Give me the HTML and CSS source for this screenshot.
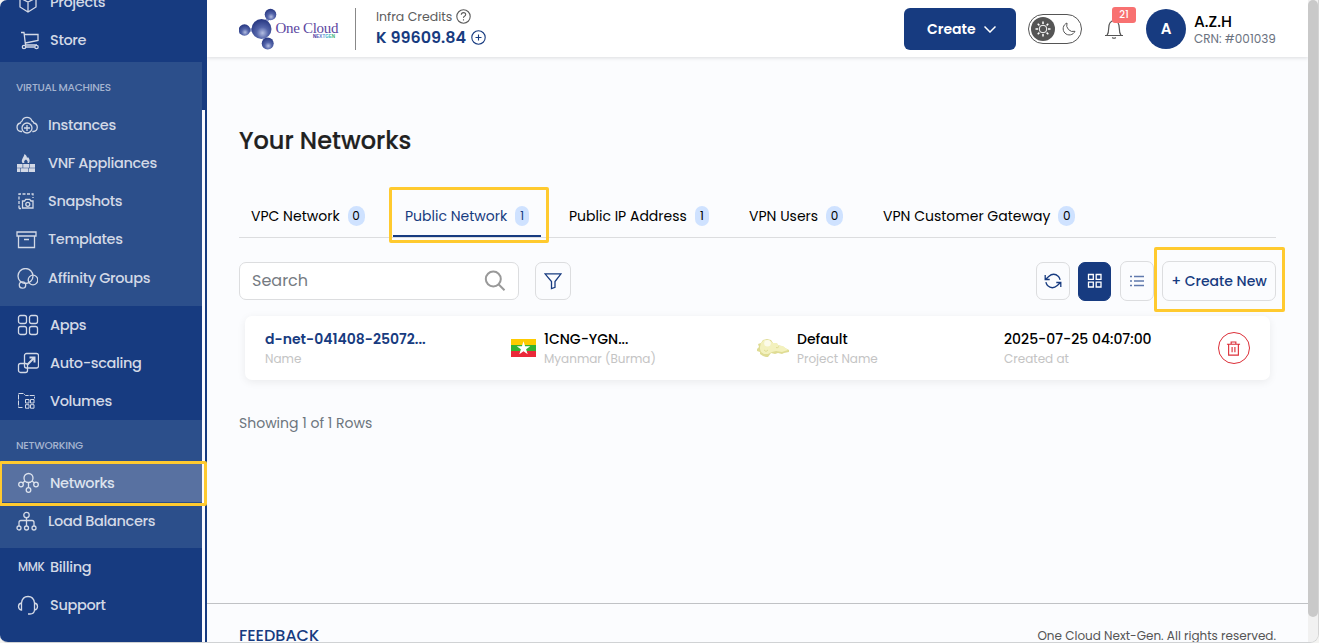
FILE: index.html
```html
<!DOCTYPE html>
<html lang="en">
<head>
<meta charset="utf-8">
<title>One Cloud - Your Networks</title>
<link rel="stylesheet" href="styles.css">
</head>
<body>
<div class="window">
  <aside class="sidebar">
    <nav class="menu">
      <div class="group group-top">
        <a class="item inset"><svg class="ico" viewBox="0 0 22 22"><path d="M11 2l8 4v9l-8 5-8-5V6zM3 6l8 4 8-4M11 10v10"/></svg><span>Projects</span></a>
        <a class="item inset"><svg class="ico" viewBox="0 0 22 22"><path d="M4 2.500h3l1.500 12.500H20M7.500 4.500H21v6L8.500 13"/><circle cx="7" cy="17" r="1.700"/><circle cx="19.500" cy="17" r="1.700"/><path d="M8.700 17h9"/></svg><span>Store</span></a>
      </div>
      <div class="group light group-vm">
        <h3 class="heading">VIRTUAL MACHINES</h3>
        <a class="item"><svg class="ico" viewBox="0 0 22 22"><path d="M6 17.500H5a4.300 4.300 0 0 1-.5-8.500 2.500 2.500 0 0 1 1.500-2 5.300 5.300 0 0 1 10 0 2.500 2.500 0 0 1 1.800 2 4.300 4.300 0 0 1-.5 8.500h-1"/><circle cx="11" cy="14" r="5"/><path d="M11 11v6M8 14h6"/></svg><span>Instances</span></a>
        <a class="item"><svg class="ico" viewBox="0 0 22 22"><g class="solid"><path d="M1 12h5.600v3.700H1zM7.200 12h6v3.700h-6zM13.800 12H19v3.700h-5.200zM1 16.300h3v3.700H1zM4.600 16.300h7.600v3.700H4.600zM12.800 16.300H19v3.700h-6.200z"/><path d="M6.500 11C4.500 8 7.500 6 8.500 2c2 1.300 2.500 3 2.500 4l1-1c2 2.500 2 4 1 6h-1.500c.8-1.500-.5-2.500-1.500-3.500-1.500 1-2.500 2-1.500 3.500z"/></g></svg><span>VNF Appliances</span></a>
        <a class="item"><svg class="ico" viewBox="0 0 22 22"><path stroke-dasharray="3 1.500" d="M3 18.500V4h14v4M3 18.500h2"/><path d="M6.500 11h2l1.200-1.700h4L15 11h2v7H6.500z"/><circle cx="11.800" cy="14.300" r="2"/></svg><span>Snapshots</span></a>
        <a class="item"><svg class="ico" viewBox="0 0 22 22"><path d="M1 3h19v4H1zM2.500 7v11.500h16V7M8 10.500h5"/></svg><span>Templates</span></a>
        <a class="item low"><svg class="ico" viewBox="0 0 22 22"><circle cx="9.500" cy="8" r="7.500"/><circle cx="17" cy="12" r="4.800"/><circle cx="6.500" cy="17" r="3.200"/></svg><span>Affinity Groups</span></a>
      </div>
      <div class="group group-mid">
        <a class="item inset"><svg class="ico" viewBox="0 0 22 22"><rect x="1.500" y="1.500" width="8" height="8" rx="2"/><rect x="12.500" y="1.500" width="8" height="8" rx="2"/><rect x="1.500" y="12.500" width="8" height="8" rx="2"/><rect x="12.500" y="12.500" width="8" height="8" rx="2"/></svg><span>Apps</span></a>
        <a class="item inset"><svg class="ico" viewBox="0 0 22 22"><rect x="7.500" y="1.500" width="14" height="14.500" rx="2"/><rect x="1.500" y="11.500" width="9" height="9" rx="2"/><path stroke-width="2" d="M10.500 12.500l6.500-6.500M12.500 5.500h5v5"/></svg><span>Auto-scaling</span></a>
        <a class="item inset"><svg class="ico thin" viewBox="0 0 22 22"><path stroke-dasharray="5 1" d="M5.500 17.500H1.500V3.500h5l2 2h9V8.500"/><path d="M8.500 9.500h3.500v3.500H8.500zM13.500 9.500H17v3.500h-3.500zM8.500 14.700h3.500v3.500H8.500zM13.500 14.700H17v3.500h-3.500z"/></svg><span>Volumes</span></a>
      </div>
      <div class="group light group-net">
        <h3 class="heading">NETWORKING</h3>
        <a class="item inset active"><svg class="ico" viewBox="0 0 22 22"><circle cx="11.500" cy="6" r="4.500"/><circle cx="4" cy="12.500" r="2.300"/><circle cx="19" cy="12.500" r="2.300"/><circle cx="11.500" cy="18" r="2.300"/><path d="M8 9l-2.500 2M15 9l2.500 2M11.500 10.500v5"/></svg><span>Networks</span></a>
        <a class="item"><svg class="ico" viewBox="0 0 22 22"><circle cx="10.500" cy="5" r="2.700"/><circle cx="3" cy="18" r="2"/><circle cx="10.500" cy="18" r="2"/><circle cx="18" cy="18" r="2"/><path d="M10.500 7.700V16M3 16v-3.500q0-2 2-2h11q2 0 2 2V16"/></svg><span>Load Balancers</span></a>
      </div>
      <div class="group group-end">
        <a class="item inset"><span class="mmk">MMK</span><span>Billing</span></a>
        <a class="item inset"><svg class="ico" viewBox="0 0 22 22"><path d="M4.500 9C5 5 7.500 2.500 11 2.500S17 5 17.500 9M4.500 9v7q-3-.5-3-3.500t3-3.500M17.500 9v7q3-.5 3-3.500t-3-3.500M17.500 16q-.3 4-4.500 4h-2"/></svg><span>Support</span></a>
      </div>
    </nav>
    <div class="rail"><div class="rail-thumb"></div></div>
    <div class="mark mark-side"></div>
  </aside>

  <div class="page">
    <header class="topbar">
      <svg class="logo" viewBox="0 0 104 44">
        <defs>
          <radialGradient id="ball" cx=".55" cy=".7" r=".65"><stop offset="0" stop-color="#b4bee2"/><stop offset=".45" stop-color="#5465aa"/><stop offset="1" stop-color="#2a3a84"/></radialGradient>
          <linearGradient id="tag"><stop offset="0" stop-color="#35208f"/><stop offset=".4" stop-color="#5a7fd0"/><stop offset=".7" stop-color="#35b6c8"/><stop offset="1" stop-color="#35a84a"/></linearGradient>
        </defs>
        <path d="M7 23h14M23 22l8-14M22 23l7 14" stroke="#8f9bcb" stroke-width="3.500"/>
        <circle cx="5.500" cy="23" r="5.800" fill="url(#ball)"/><circle cx="31.500" cy="7.500" r="5.800" fill="url(#ball)"/><circle cx="28.700" cy="36.500" r="6" fill="url(#ball)"/><circle cx="22.500" cy="22" r="10" fill="url(#ball)"/>
        <text x="36.500" y="25.500" textLength="63" class="logo-name">One Cloud</text>
        <text x="74" y="31" textLength="22" class="logo-tag" fill="url(#tag)">NEXTGEN</text>
      </svg>
      <div class="credits">
        <div class="credits-label"><span>Infra Credits</span><svg class="i15" viewBox="0 0 15 15"><circle cx="7.500" cy="7.500" r="6.700"/><path d="M5.300 5.800q0-2.200 2.200-2.200t2.200 2q0 1-1.200 1.700t-1 1.500M7.500 10.200v1.200"/></svg></div>
        <div class="credits-value"><span>K 99609.84</span><svg class="i15" viewBox="0 0 15 15"><circle cx="7.500" cy="7.500" r="6.700"/><path d="M7.500 4.500v6M4.500 7.500h6"/></svg></div>
      </div>
      <button class="create"><span>Create</span><svg viewBox="0 0 12 8"><path d="M.5 1.500L6 7l5.500-5.500"/></svg></button>
      <div class="theme">
        <span class="sun"><svg viewBox="0 0 24 24"><circle cx="12" cy="12" r="3.800"/><path stroke-width="1.500" d="M12 4.500V7M12 17v2.500M4.500 12H7M17 12h2.500M6.700 6.700l1.700 1.700M15.600 15.600l1.700 1.700M6.700 17.300l1.700-1.700M15.600 8.400l1.700-1.700"/></svg></span>
        <svg class="moon" viewBox="0 0 14 14"><path d="M5 1a6.200 6.200 0 1 0 8 8.300A6.500 6.500 0 0 1 5 1z"/></svg>
      </div>
      <div class="bell"><svg viewBox="0 0 20 22"><path d="M1 17.500h18M3 17.300c1.500-2 1.700-4 1.700-7C4.700 6 6 3 10 2.500c4 .5 5.300 3.500 5.300 7.800 0 3 .2 5 1.700 7M10 2.500V1M8.200 19.500q1.800 1.500 3.600 0"/></svg><span class="count">21</span></div>
      <div class="avatar">A</div>
      <div class="who"><b>A.Z.H</b><span>CRN: #001039</span></div>
    </header>

    <main class="content">
      <h1>Your Networks</h1>
      <div class="tabs">
        <a class="tab t1"><span>VPC Network</span><i>0</i></a>
        <a class="tab t2 on"><span>Public Network</span><i class="one">1</i></a>
        <a class="tab t3"><span>Public IP Address</span><i class="one">1</i></a>
        <a class="tab t4"><span>VPN Users</span><i>0</i></a>
        <a class="tab t5"><span>VPN Customer Gateway</span><i>0</i></a>
        <div class="mark mark-tab"></div>
      </div>
      <div class="tools">
        <div class="search"><span>Search</span><svg viewBox="0 0 22 22"><circle cx="9.300" cy="9" r="7.500"/><path d="M14.500 14.200l6 6"/></svg></div>
        <div class="btn filter"><svg viewBox="0 0 18 18"><path d="M1 1.800h16L11 9.500v5.800L7.500 16.500v-7z"/></svg></div>
        <div class="btn refresh"><svg viewBox="0 0 18 18"><path d="M1.200 3v4.500h4.500M16.800 15v-4.500h-4.500M1.700 7.200l3-2.700q5-4.500 9.800 0 1.200 1.400 1.600 3.300M16.300 10.800l-3 2.700q-5 4.500-9.800 0-1.200-1.400-1.600-3.300"/></svg></div>
        <div class="btn grid"><svg viewBox="0 0 16 16"><path d="M1.500 1.500h4.800v4.800H1.500zM9.200 1.500H14v4.800H9.200zM1.500 9.200h4.800V14H1.500zM9.200 9.200H14V14H9.200z"/></svg></div>
        <div class="btn list"><svg viewBox="0 0 16 16"><path d="M5 3.500h10M5 8h10M5 12.500h10M1 3.500h2M1 8h2M1 12.500h2"/></svg></div>
        <div class="btn new"><span>+ Create New</span></div>
        <div class="mark mark-new"></div>
      </div>
      <div class="row">
        <div class="cell c-name"><b>d-net-041408-25072...</b><small>Name</small></div>
        <svg class="flag" viewBox="0 0 25 18"><path fill="#fecb00" d="M0 0h25v6H0z"/><path fill="#34b233" d="M0 6h25v6H0z"/><path fill="#ea2839" d="M0 12h25v6H0z"/><path fill="#fff" d="M12.500 2.200l1.600 5h5.200l-4.200 3.100 1.600 5-4.200-3.100-4.200 3.100 1.600-5-4.200-3.100h5.200z"/></svg>
        <div class="cell c-zone"><b>1CNG-YGN...</b><small>Myanmar (Burma)</small></div>
        <svg class="key" viewBox="0 0 32 19"><path fill="#dfdc94" d="M0 10l2-2-1-3 3-1 2-3 4-1 4 1 2 3 3 0 1 2 5 1 3 2 4 2v2l-5 1-2 1-4-1-3 1-4-1-3 4H9l-3-1-3-2 0-2-3-1z"/><path fill="#f3f1be" d="M3 8l1-4 3-3h5l4 3 4 0 2 3 4 0 5 4-6 2-6-1-4 1-4 2-4 0-3-2-1-3z"/><circle cx="10.500" cy="4.300" r="3.300" fill="#fcfbea"/><path d="M7 11q2 3 4 0M19 8.500q1 1 3-1" fill="none" stroke="#dfdc94"/></svg>
        <div class="cell c-proj"><b>Default</b><small>Project Name</small></div>
        <div class="cell c-date"><b>2025-07-25 04:07:00</b><small>Created at</small></div>
        <div class="trash"><svg viewBox="0 0 16 16"><path d="M1 3.500h14M5.500 3.500V1h5v2.500M2.800 3.500V15h10.400V3.500M6.500 6.500v5.500M9.500 6.500v5.500"/></svg></div>
      </div>
      <p class="showing">Showing 1 of 1 Rows</p>
    </main>

    <footer class="footer"><span class="fb">FEEDBACK</span><span class="copy">One Cloud Next-Gen. All rights reserved.</span></footer>
  </div>
  <div class="scroll"><div class="scroll-thumb"></div></div>
</div>
</body>
</html>
```
FILE: styles.css
```css
* { box-sizing: border-box; }
body { margin: 0; height: 643px; overflow: hidden; background: #f4f4f2; font-family: Poppins, Inter, "Open Sans", sans-serif; color: #000; }
svg { fill: none; stroke: currentColor; flex: none; display: block; }
.window { display: flex; width: 1319px; height: 643px; overflow: hidden; border-radius: 7px 0 9px 8px; border-right: 1px solid #d4d4d4; border-bottom: 1px solid #d0d2d4; }
span, b, small { white-space: nowrap; }

/* Sidebar */
.sidebar { position: relative; display: flex; width: 207px; flex: none; background: #173b80; }
.menu { width: 202px; color: #d3d9e6; }
.group-top { height: 62px; overflow: hidden; display: flex; flex-direction: column; justify-content: flex-end; padding-bottom: 2px; }
.light { background: #2c4f8b; }
.group-vm { height: 244px; }
.group-mid { height: 114px; }
.group-net { height: 128px; }
.heading { margin: 0; height: 44px; padding: 18px 0 0 16px; font-size: 10.500px; line-height: 15px; font-weight: 500; letter-spacing: -.25px; color: #a5b4d0; white-space: nowrap; }
.item { display: flex; align-items: center; height: 38.200px; flex: none; padding-left: 16px; gap: 10px; font-size: 14.500px; font-weight: 500; letter-spacing: -.36px; }
.item.low { height: 40px; }
.group-mid .item, .group-net .item, .group-end .item { height: 38px; }
.inset { padding-left: 17px; gap: 11px; }
.ico { width: 22px; height: 22px; stroke-width: 1.300; }
.ico.thin { stroke-width: 1; }
.solid { fill: currentColor; stroke: none; }
.active { background: #5871a1; margin-left: 2px; padding-left: 15px; color: #dde3ee; }
.mmk { font-size: 11.500px; width: 27px; }
.group-end .item:first-child { padding-left: 18px; gap: 5px; }
.rail { width: 3px; background: #fafaff; }
.rail-thumb { height: 110px; background: #173b80; }
.mark { position: absolute; border: 3px solid #ffca2f; border-radius: 2px; }
.mark-side { left: -1px; top: 461px; width: 208px; height: 45px; }

/* Header */
.page { display: flex; flex-direction: column; width: 1101px; background: #fbfcfe; }
.topbar { display: flex; align-items: center; height: 57px; flex: none; background: #fff; padding-left: 32px; box-shadow: 0 1px 4px rgba(0,0,0,.13); }
.logo { width: 104px; height: 44px; stroke: none; }
.logo-name { font: 15px "Liberation Serif", serif; fill: #5b469f; }
.logo-tag { font: bold 4.500px "Liberation Sans", sans-serif; }
.credits { width: 150px; height: 42px; margin-left: 12px; padding-left: 20px; border-left: 1px solid #888; }
.credits-label, .credits-value { display: flex; align-items: center; }
.credits-label { gap: 4px; height: 18px; font-size: 12.500px; color: #5c5c5c; }
.credits-value { gap: 5px; height: 24px; font-size: 16px; font-weight: 600; color: #173b80; }
.i15 { width: 15px; height: 15px; stroke-width: 1.100; }
.create { display: flex; align-items: center; width: 112px; height: 42px; margin-left: 399px; padding: 1px 0 0 23px; gap: 8px; border: 0; border-radius: 6px; background: #173b80; color: #fff; font: 600 14px Poppins, Inter, sans-serif; }
.create svg { width: 12px; height: 8px; stroke-width: 1.500; }
.theme { display: flex; align-items: center; width: 54px; height: 30px; margin-left: 12px; padding-left: 2px; gap: 7px; border: 1px solid #555; border-radius: 15px; color: #555; }
.sun { width: 24px; height: 24px; border-radius: 50%; background: #555; color: #fff; }
.moon { width: 14px; height: 14px; }
.bell { position: relative; width: 20px; height: 22px; margin-left: 22px; color: #555; }
.bell svg { width: 20px; height: 22px; stroke-width: 1.200; }
.count { position: absolute; left: 8px; top: -11px; width: 24px; height: 16px; border-radius: 3px; background: #f87171; color: #fff; font-size: 10px; font-weight: 500; line-height: 16px; text-align: center; }
.avatar { width: 40px; height: 40px; margin-left: 22px; border-radius: 50%; background: #173b80; color: #fff; font-size: 15px; font-weight: 600; line-height: 40px; text-align: center; }
.who { display: flex; flex-direction: column; margin-left: 8px; padding-top: 3px; }
.who b { font-size: 15.500px; line-height: 18px; font-weight: 500; }
.who span { font-size: 12px; line-height: 16px; color: #6b7280; }

/* Content */
.content { height: 546px; flex: none; padding: 68px 32px 0; }
h1 { margin: 0; height: 32px; line-height: 32px; font-size: 24px; font-weight: 500; color: #212121; -webkit-text-stroke: .2px #212121; }
.tabs { position: relative; display: flex; height: 43px; margin-top: 38px; width: 1037px; border-bottom: 1px solid #dcdddf; }
.tab { display: flex; align-items: flex-start; height: 42px; padding: 11px 0 0 12px; gap: 8px; font-size: 14px; line-height: 21px; }
.t1 { width: 154px; }
.t2 { width: 148px; }
.t3 { width: 192px; margin-left: 16px; }
.t4 { width: 134px; margin-left: -12px; }
.t5 { width: 210px; }
.tab.on { color: #173b80; border-bottom: 2px solid #173b80; }
.tab i { width: 17px; height: 20px; border-radius: 9px; background: #cfe2ff; font-size: 12px; line-height: 20px; font-style: normal; text-align: center; }
.tab i.one { width: 14px; border-radius: 7px; }
.mark-tab { left: 150px; top: -8px; width: 160px; height: 56px; }
.tools { position: relative; display: flex; align-items: center; height: 40px; margin-top: 23px; width: 1037px; color: #173b80; }
.search { display: flex; align-items: center; justify-content: space-between; width: 280px; height: 38px; padding: 0 12px; border: 1px solid #dcdddf; border-radius: 7px; background: #fff; color: #757b82; font-size: 16px; }
.search span { padding-bottom: 1px; }
.search svg { width: 22px; height: 22px; stroke: #999; stroke-width: 2; }
.btn { display: flex; align-items: center; justify-content: center; width: 34px; height: 38px; border: 1px solid #dcdddf; border-radius: 7px; }
.btn svg { width: 16px; height: 16px; stroke-width: 1.300; }
.btn.filter { width: 36px; margin-left: 16px; }
.btn.filter svg, .btn.refresh svg { width: 18px; height: 18px; }
.btn.refresh { margin-left: 465px; }
.btn.grid { width: 33px; height: 39px; margin-left: 8px; border-color: #173b80; background: #173b80; color: #fff; }
.btn.list { height: 40px; margin-left: 9px; color: #6079ad; }
.btn.list svg { stroke-width: 1.500; }
.btn.new { width: 114px; height: 40px; margin-left: 8px; padding-top: 1px; font-size: 14px; font-weight: 500; }
.mark-new { left: 915px; top: -14px; width: 131px; height: 65px; }
.row { display: flex; align-items: center; width: 1025px; height: 64px; margin: 15px 0 0 6px; padding-left: 20px; border-radius: 7px; background: #fff; box-shadow: 0 2px 8px rgba(0,0,0,.07); }
.cell b, .cell small { display: block; }
.cell b { height: 20px; line-height: 21px; font-size: 14px; font-weight: 500; }
.cell small { height: 19px; line-height: 19px; font-size: 12px; color: #c4c4c4; }
.c-name { width: 246px; }
.c-name b { color: #173b80; font-weight: 600; }
.flag { width: 25px; height: 18px; stroke: none; }
.c-zone { width: 213px; margin-left: 8px; }
.key { width: 32px; height: 19px; stroke: none; }
.c-proj { width: 207px; margin-left: 8px; }
.c-date { width: 214px; }
.trash { display: flex; align-items: center; justify-content: center; width: 32px; height: 32px; padding-right: 1px; border: 1px solid #dc2f38; border-radius: 50%; color: #dc2f38; }
.trash svg { width: 15px; height: 15px; stroke-width: 1.200; }
.showing { margin: 33px 0 0; font-size: 14px; line-height: 20px; color: #6c757d; }
.footer { display: flex; justify-content: space-between; height: 60px; flex: none; padding: 22px 32px 0; border-top: 1px solid #c0c2c5; }
.fb { font-size: 16px; line-height: 20px; color: #173b80; font-weight: 500; }
.copy { font-size: 12px; line-height: 20px; color: #555; }

/* Page scrollbar */
.scroll { width: 10px; flex: none; background: #f1f1f1; }
.scroll-thumb { height: 617px; border-radius: 5px; background: #c9c9c9; }
```
